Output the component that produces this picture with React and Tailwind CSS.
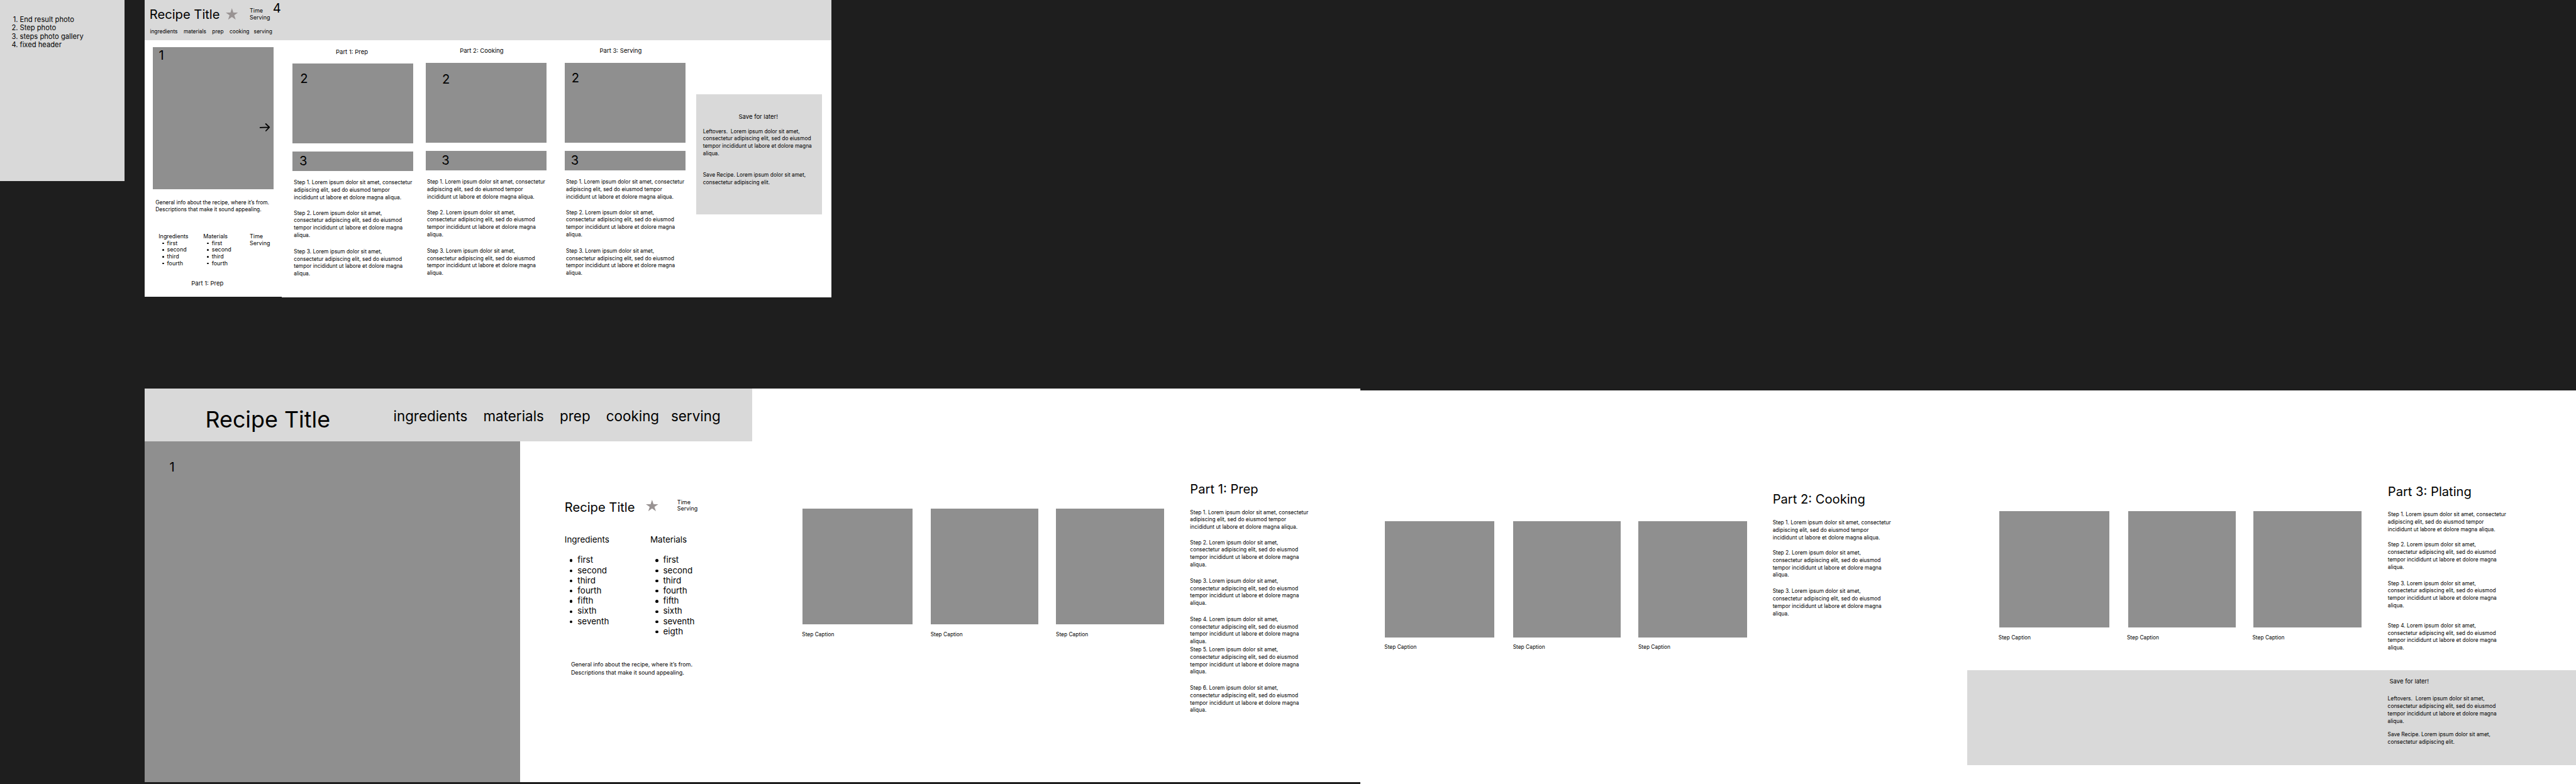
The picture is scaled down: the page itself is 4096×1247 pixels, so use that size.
const LOREM = " Lorem ipsum dolor sit amet,\nconsectetur adipiscing elit, sed do eiusmod\ntempor incididunt ut labore et dolore magna\naliqua.";
const FIRST = "Step 1. Lorem ipsum dolor sit amet, consectetur\nadipiscing elit, sed do eiusmod tempor\nincididunt ut labore et dolore magna aliqua.";
const LEFTOVERS = "Leftovers. " + LOREM;
const SAVE = "Save Recipe. Lorem ipsum dolor sit amet,\nconsectetur adipiscing elit.";
const INFO = "General info about the recipe, where it’s from.\nDescriptions that make it sound appealing.";
const NAV = "ingredients    materials    prep    cooking   serving";

function Body({ className = "", children }) {
  return <p className={`-mb-[0.88px] pt-[0.88px] whitespace-pre text-[8.4px] leading-[11.76px] ${className}`}>{children}</p>;
}

// gaps[i] is the top margin class of step i + 2
function Steps({ gaps, className = "" }) {
  return (
    <div className={className}>
      <Body>{FIRST}</Body>
      {gaps.map((gap, i) => (
        <Body key={i} className={gap}>{`Step ${i + 2}.` + LOREM}</Body>
      ))}
    </div>
  );
}

function Heading({ className = "", children }) {
  return <h2 className={`-mb-[0.5px] pt-[0.5px] text-[20.16px] leading-[24px] whitespace-pre ${className}`}>{children}</h2>;
}

function SmallHeading({ className = "", children }) {
  return <h2 className={`-mb-[0.5px] pt-[0.5px] text-[9.52px] leading-[12px] whitespace-pre ${className}`}>{children}</h2>;
}

function Star({ className }) {
  return (
    <svg viewBox="0 0 100 95.1" preserveAspectRatio="none" className={`shrink-0 fill-[#999393] ${className}`}>
      <polygon points="50,0 61.8,36.3 100,36.3 69.1,58.8 80.9,95.1 50,72.7 19.1,95.1 30.9,58.8 0,36.3 38.2,36.3" />
    </svg>
  );
}

function Marker({ className, children }) {
  return <span className={`absolute pt-[0.5px] text-[20.16px] leading-[24px] ${className}`}>{children}</span>;
}

function TimeServing({ className = "" }) {
  return <p className={`-mb-[0.84px] pt-[0.84px] whitespace-pre text-[8.96px] leading-[10.67px] ${className}`}>{"Time\nServing"}</p>;
}

function SmallList({ title, className }) {
  return (
    <div className={`-mb-[0.84px] shrink-0 pt-[0.84px] text-[8.96px] leading-[10.67px] ${className}`}>
      <h3>{title}</h3>
      <ul>
        {["first", "second", "third", "fourth"].map((t) => (
          <li key={t} className="flex items-center pl-[5.7px]">
            <span className="mr-[4.9px] size-[2.8px] rounded-full bg-black" />
            {t}
          </li>
        ))}
      </ul>
    </div>
  );
}

function LargeList({ title, items, className }) {
  return (
    <div className={`shrink-0 text-[13.44px] leading-[16.24px] ${className}`}>
      <h3>{title}</h3>
      <ul className="mt-[16.2px]">
        {items.map((t) => (
          <li key={t} className="flex items-center pl-[8.4px]">
            <span className="mt-[2.2px] mr-[7.8px] size-[4.3px] rounded-full bg-black" />
            {t}
          </li>
        ))}
      </ul>
    </div>
  );
}

function MobilePart({ title, className, titleClass, photoClass, two, three }) {
  return (
    <section className={`w-[192px] shrink-0 ${className}`}>
      <SmallHeading className={titleClass}>{title}</SmallHeading>
      <div className={`relative h-[127.6px] bg-[#8f8f8f] ${photoClass}`}>
        <Marker className={two}>2</Marker>
      </div>
      <div className="relative mt-[12.3px] h-[31.3px] bg-[#8f8f8f]">
        <Marker className={three}>3</Marker>
      </div>
      <Steps className="mt-[12.7px] ml-[1.9px]" gaps={["mt-[12.9px]", "mt-[14.1px]"]} />
    </section>
  );
}

function Photo({ className, boxClass, captionClass }) {
  return (
    <figure className={`shrink-0 ${className}`}>
      <div className={`bg-[#8f8f8f] ${boxClass}`} />
      <figcaption className={`pt-[0.88px] text-[8.4px] leading-[11.76px] ${captionClass}`}>Step Caption</figcaption>
    </figure>
  );
}

function MobileOverview() {
  return (
    <div className="absolute top-0 left-[229.6px] w-[1092.7px]">
      <header className="relative h-[64.4px] bg-[#d9d9d9]">
        <div className="flex h-[44.2px] items-start pl-[8.2px]">
          <Heading className="mt-[10.3px] w-[121px] shrink-0">Recipe Title</Heading>
          <Star className="mt-[12.5px] h-[18.2px] w-[19.5px]" />
          <TimeServing className="mt-[11.2px] ml-[18.8px]" />
        </div>
        <nav className="pt-[0.88px] pl-[8.8px] text-[8.4px] leading-[11.76px] whitespace-pre">{NAV}</nav>
        <Marker className="top-[0.6px] left-[204.1px]">4</Marker>
      </header>
      <div className="flex items-start">
        <section className="h-[407.7px] w-[218.4px] shrink-0 bg-white pt-[10.5px]">
          <div className="relative ml-[13px] h-[226.4px] w-[192px] bg-[#8f8f8f]">
            <Marker className="top-[0.2px] left-[10px]">1</Marker>
            <svg viewBox="0 0 18 15" fill="none" stroke="#000" strokeWidth="1.8" strokeLinecap="round" strokeLinejoin="round" className="absolute top-[119.9px] left-[169.8px] h-[15px] w-[18px]">
              <path d="M1.7 7.9H2L16.3 7.4M10.6 2L16.3 7.4L10.9 13" />
            </svg>
          </div>
          <Body className="mt-[14.4px] ml-[17.7px]">{INFO}</Body>
          <div className="mt-[30.9px] flex pl-[22.6px]">
            <SmallList title="Ingredients" className="w-[71.1px]" />
            <SmallList title="Materials" className="w-[73.7px]" />
            <TimeServing />
          </div>
          <SmallHeading className="mt-[21.4px] ml-[74.7px]">Part 1: Prep</SmallHeading>
        </section>
        <div className="flex h-[408.3px] grow items-start bg-white">
          <MobilePart title="Part 1: Prep" className="ml-[17.4px] pt-[12.4px]" titleClass="ml-[68.6px]" photoClass="mt-[11.9px]" two="top-[11.9px] left-[11.8px]" three="top-[3px] left-[10.7px]" />
          <MobilePart title="Part 2: Cooking" className="ml-[19.7px] pt-[10.6px]" titleClass="ml-[54.1px]" photoClass="mt-[12.7px]" two="top-[14px] left-[25.9px]" three="top-[3px] left-[25.3px]" />
          <MobilePart title="Part 3: Serving" className="ml-[29.1px] pt-[10.6px]" titleClass="ml-[55.4px]" photoClass="mt-[12.7px]" two="top-[11.9px] left-[10.7px]" three="top-[3px] left-[9.5px]" />
          <aside className="mt-[86.1px] ml-[16.8px] h-[190.4px] w-[200px] shrink-0 bg-[#d9d9d9] pt-[29.2px] pl-[10.8px]">
            <SmallHeading className="ml-[56.7px]">Save for later!</SmallHeading>
            <Body className="mt-[11px]">{LEFTOVERS}</Body>
            <Body className="mt-[22.4px]">{SAVE}</Body>
          </aside>
        </div>
      </div>
    </div>
  );
}

function DesktopHero() {
  const seven = ["first", "second", "third", "fourth", "fifth", "sixth", "seventh"];
  return (
    <div className="absolute top-[617.7px] left-[229.6px] flex h-[626.1px] w-[966px] flex-col bg-white">
      <header className="flex h-[84px] shrink-0 items-start bg-[#d9d9d9] pl-[96.9px]">
        <h1 className="mt-[27.1px] w-[299px] shrink-0 text-[35.84px] leading-[44px]">Recipe Title</h1>
        <nav className="mt-[29.6px] pt-[0.5px] text-[22.4px] leading-[28px] whitespace-pre">{NAV}</nav>
      </header>
      <div className="flex grow">
        <div className="relative w-[597.4px] shrink-0 bg-[#8f8f8f]">
          <Marker className="top-[28.6px] left-[40px]">1</Marker>
        </div>
        <section className="grow pt-[91.3px] pl-[70.8px]">
          <div className="flex h-[56.9px] items-start">
            <Heading className="mt-[1.2px] w-[129.5px] shrink-0">Recipe Title</Heading>
            <Star className="mt-[2px] h-[18.1px] w-[19.7px]" />
            <TimeServing className="ml-[29.9px]" />
          </div>
          <div className="flex h-[162.3px] items-start">
            <LargeList title="Ingredients" items={seven} className="w-[136.2px]" />
            <LargeList title="Materials" items={[...seven, "eigth"]} className="w-[100px]" />
          </div>
          <p className="mt-[38.2px] ml-[10.1px] text-[8.96px] leading-[13px] whitespace-pre">{INFO}</p>
        </section>
      </div>
    </div>
  );
}

function DesktopPrep() {
  return (
    <div className="absolute top-[618.2px] left-[1195.6px] flex h-[626.1px] w-[967.7px] items-start bg-white pl-[80.1px]">
      <Photo className="mt-[190.5px]" boxClass="h-[184.7px] w-[174.9px]" captionClass="mt-[9.4px] -ml-[0.4px]" />
      <Photo className="mt-[190.5px] ml-[29.1px]" boxClass="h-[184.7px] w-[171.2px]" captionClass="mt-[9.4px]" />
      <Photo className="mt-[190.5px] ml-[28.6px]" boxClass="h-[184.7px] w-[171.8px]" captionClass="mt-[9.4px] -ml-[0.4px]" />
      <section className="mt-[147.2px] ml-[41.1px]">
        <Heading>Part 1: Prep</Heading>
        <Steps className="mt-[19.3px]" gaps={["mt-[12.8px]", "mt-[14.1px]", "mt-[14.1px]", "mt-[1.1px]", "mt-[13.9px]"]} />
      </section>
    </div>
  );
}

function DesktopCooking() {
  return (
    <div className="absolute top-[621px] left-[2163.3px] flex h-[626px] w-[965px] items-start bg-white pl-[38.4px]">
      <Photo className="mt-[207.6px]" boxClass="h-[185.1px] w-[174.8px]" captionClass="mt-[9.4px] -ml-[0.4px]" />
      <Photo className="mt-[207.6px] ml-[29.2px]" boxClass="h-[185.1px] w-[171.2px]" captionClass="mt-[9.4px]" />
      <Photo className="mt-[207.6px] ml-[28.5px]" boxClass="h-[185.1px] w-[172.5px]" captionClass="mt-[9.4px] -ml-[0.4px]" />
      <section className="mt-[160.6px] ml-[40.8px]">
        <Heading>Part 2: Cooking</Heading>
        <Steps className="mt-[19.5px]" gaps={["mt-[12.9px]", "mt-[14px]"]} />
      </section>
    </div>
  );
}

function DesktopPlating() {
  return (
    <div className="absolute top-[621px] left-[3128px] h-[626px] w-[968px] bg-white">
      <div className="flex h-[445.2px] items-start pl-[51.4px]">
        <Photo className="mt-[192.1px]" boxClass="h-[184.7px] w-[174.7px]" captionClass="mt-[10.1px] -ml-[1.6px]" />
        <Photo className="mt-[192.1px] ml-[29.5px]" boxClass="h-[184.7px] w-[171px]" captionClass="mt-[10.1px] -ml-[1.6px]" />
        <Photo className="mt-[192.1px] ml-[28.8px]" boxClass="h-[184.7px] w-[171.6px]" captionClass="mt-[10.1px] -ml-[1.9px]" />
        <section className="mt-[148.5px] ml-[41.8px]">
          <Heading>Part 3: Plating</Heading>
          <Steps className="mt-[19px]" gaps={["mt-[12.8px]", "mt-[14.1px]", "mt-[20.2px]"]} />
        </section>
      </div>
      <aside className="h-[151.1px] bg-[#d9d9d9] pt-[11.4px] pl-[668.6px]">
        <SmallHeading className="ml-[2.9px]">Save for later!</SmallHeading>
        <Body className="mt-[15.9px]">{LEFTOVERS}</Body>
        <Body className="mt-[10px]">{SAVE}</Body>
      </aside>
    </div>
  );
}

export default function App() {
  const notes = ["End result photo", "Step photo", "steps photo gallery", "fixed header"];
  return (
    <main className="relative h-[1247px] w-[4096px] overflow-hidden bg-[#1e1e1e] font-['Inter',sans-serif] text-black">
      <ol className="absolute top-0 left-0 h-[287.8px] w-[198.3px] bg-[#d9d9d9] pt-[24.8px] text-[11.2px] leading-[13.5px]">
        {notes.map((t, i) => (
          <li key={t} className="flex gap-[3px]">
            <span className="w-[28.5px] text-right">{i + 1}.</span>
            {t}
          </li>
        ))}
      </ol>
      <MobileOverview />
      <DesktopHero />
      <DesktopPrep />
      <DesktopCooking />
      <DesktopPlating />
    </main>
  );
}
